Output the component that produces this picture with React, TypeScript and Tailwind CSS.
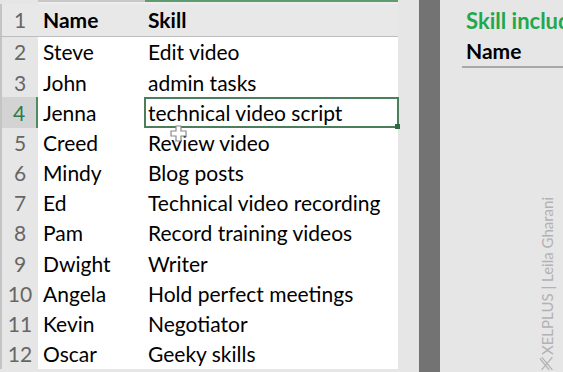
import React from 'react'

const rows = [
  ['Steve', 'Edit video'],
  ['John', 'admin tasks'],
  ['Jenna', 'technical video script'],
  ['Creed', 'Review video'],
  ['Mindy', 'Blog posts'],
  ['Ed', 'Technical video recording'],
  ['Pam', 'Record training videos'],
  ['Dwight', 'Writer'],
  ['Angela', 'Hold perfect meetings'],
  ['Kevin', 'Negotiator'],
  ['Oscar', 'Geeky skills'],
]

function App() {
  return (
    <div
      className="relative w-[563px] h-[372px] overflow-hidden bg-[#e6e6e6] flex text-[21px] text-black whitespace-nowrap"
      style={{ fontFamily: 'Lato, "Liberation Sans", sans-serif' }}
    >
      {/* sheet */}
      <div className="w-[398px] shrink-0 flex flex-col">
        {/* column header strip */}
        <div className="h-[4px] flex">
          <div className="w-[38px] bg-[#e6e6e6]" />
          <div className="w-[107px] border-t-2 border-[#c8c8c8] bg-[#ededed]" />
          <div className="flex-1 border-t-2 border-[#5e9b6f] bg-[#ededed]" />
        </div>

        {/* header row */}
        <div className="h-[33px] flex border-b border-[#bdbdbd] bg-[#e8e8e8]">
          <div className="w-[38px] border-l-2 border-[#c4c4c4] flex items-center justify-center text-[#666]">1</div>
          <div className="w-[107px] pl-[5px] flex items-center font-bold">Name</div>
          <div className="flex-1 pl-[3px] flex items-center font-bold">Skill</div>
        </div>

        {rows.map(([name, skill], i) => {
          const selected = i === 2
          return (
            <div key={name} className="h-[30.2px] flex">
              <div
                className={
                  selected
                    ? 'w-[38px] shrink-0 border-l-2 border-[#c4c4c4] bg-[#d3d3d3] border-r-2 border-r-[#4f8a61] flex items-center justify-center text-[#2f7a4a]'
                    : 'w-[38px] shrink-0 border-l-2 border-[#c4c4c4] bg-[#e6e6e6] flex items-center justify-center text-[#666]'
                }
              >
                {i + 2}
              </div>
              <div className="w-[107px] shrink-0 bg-white pl-[5px] flex items-center">{name}</div>
              <div
                className={
                  selected
                    ? 'relative flex-1 bg-white pl-[2px] flex items-center border-2 border-[#4b7f5c] -ml-[1px] -mr-[1px]'
                    : 'flex-1 bg-white pl-[3px] flex items-center'
                }
              >
                {skill}
                {selected && (
                  <span className="absolute -right-[3px] -bottom-[3px] w-[5px] h-[5px] bg-[#2e6b43]" />
                )}
              </div>
            </div>
          )
        })}
      </div>

      <div className="w-[21px] shrink-0" />
      {/* split bar */}
      <div className="w-[21px] shrink-0 bg-[#737373]" />

      {/* right pane */}
      <div className="flex-1 min-w-0 pl-[26px] pt-[5px] flex flex-col">
        <div className="h-[31px] flex items-center font-bold text-[#22a84c] text-[22px]">
          Skill includes video
        </div>
        <div className="h-[32px] -ml-[4px] pl-[4px] flex items-center font-bold border-b-2 border-[#a8a8a8]">
          Name
        </div>
      </div>

      {/* excel cursor */}
      <svg className="absolute left-[170px] top-[125px]" width="17" height="17" viewBox="0 0 17 17">
        <path d="M6 1h5v5h5v5h-5v5H6v-5H1V6h5z" fill="#fff" stroke="#8a8a8a" strokeWidth="1.2" />
      </svg>

      {/* watermark */}
      <div
        className="absolute left-[536px] bottom-[1px] text-[15px] text-[#b2b2b2] flex items-center gap-[1px]"
        style={{ writingMode: 'vertical-rl', transform: 'rotate(180deg)' }}
      >
        <svg width="15" height="15" viewBox="0 0 14 14">
          <path d="M2 1l10 12M12 1L2 13M5 1l9 11" stroke="#b2b2b2" strokeWidth="1.2" fill="none" />
        </svg>
        <span>XELPLUS | Leila Gharani</span>
      </div>
    </div>
  )
}

export default App
